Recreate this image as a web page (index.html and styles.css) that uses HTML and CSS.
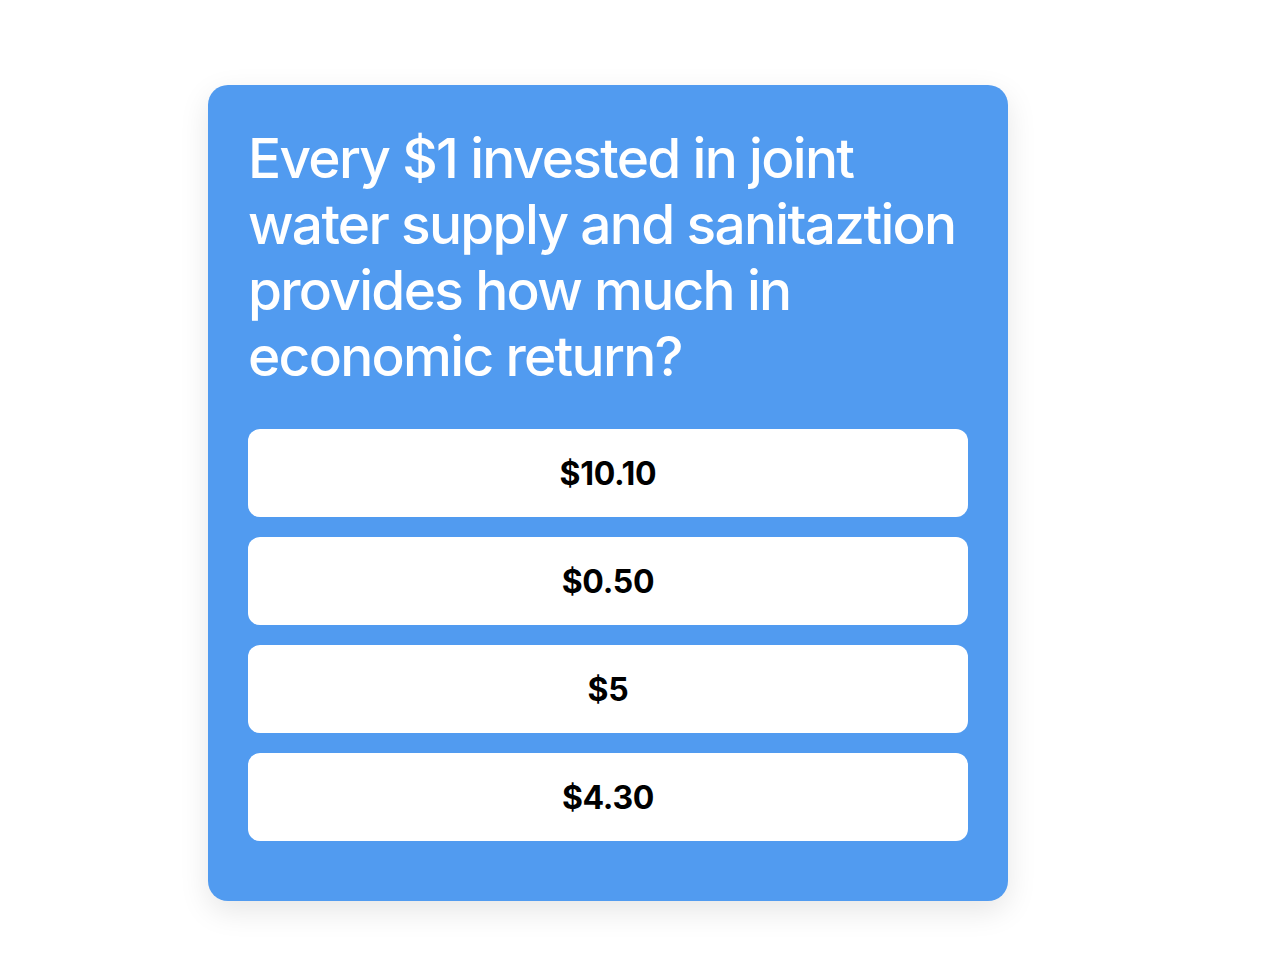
FILE: index.html
```html
<!DOCTYPE html>
<html lang="en">
<head>
<meta charset="utf-8">
<title>Quiz</title>
<link rel="stylesheet" href="styles.css">
</head>
<body>
<main class="page">
  <section class="card">
    <h1 class="question">Every $1 invested in joint water supply and sanitaztion provides how much in economic return?</h1>
    <div class="answers">
      <button class="answer">$10.10</button>
      <button class="answer">$0.50</button>
      <button class="answer">$5</button>
      <button class="answer">$4.30</button>
    </div>
  </section>
</main>
</body>
</html>
```
FILE: styles.css
```css
* { box-sizing: border-box; }
html, body { margin: 0; padding: 0; background: #ffffff; }
body { font-family: Inter, "Noto Sans", sans-serif; }
.page {
  padding: 85px 0 57px 208px;
}
.card {
  width: 800px;
  background: #519bf0;
  border-radius: 20px;
  padding: 40px 40px 20px;
  box-shadow: 0 10px 30px rgba(0, 0, 0, 0.1);
}
.question {
  margin: 0;
  color: #ffffff;
  font-size: 55px;
  line-height: 66px;
  font-weight: 500;
  letter-spacing: -1.7px;
}
.answers {
  margin-top: 40px;
  display: flex;
  flex-direction: column;
}
.answer {
  height: 88px;
  margin-bottom: 20px;
  border: none;
  border-radius: 12px;
  background: #ffffff;
  color: #000000;
  font-family: Inter, "Noto Sans", sans-serif;
  font-size: 32px;
  font-weight: 700;
  letter-spacing: -0.3px;
  padding: 0;
}
.answers .answer:last-child {
  margin-bottom: 40px;
}
```
